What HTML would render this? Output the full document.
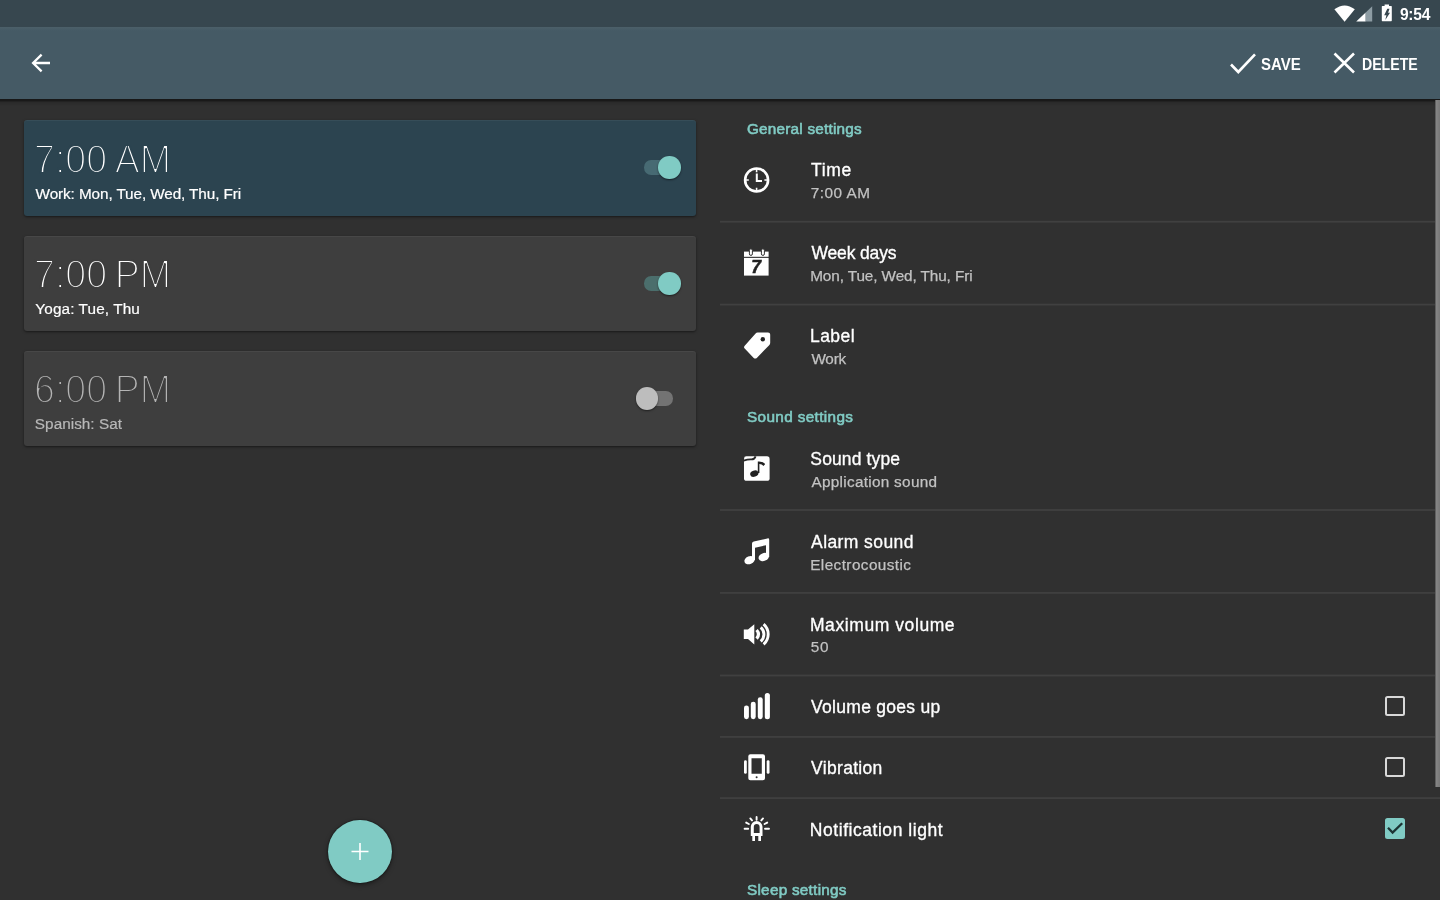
<!DOCTYPE html>
<html lang="en">
<head>
<meta charset="utf-8">
<title>Alarm</title>
<style>
*{box-sizing:border-box;margin:0;padding:0}
html,body{width:1440px;height:900px;overflow:hidden;background:#303030;font-family:"Liberation Sans",sans-serif;color:#fff}
#status{position:absolute;left:0;top:0;width:1440px;height:27px;background:#37474f}
#toolbar{position:absolute;left:0;top:27px;width:1440px;height:71.9px;background:linear-gradient(to bottom,#4c6069 0,#465b66 3px,#455a65 5px)}
#tbshadow{position:absolute;left:0;top:98.9px;width:1440px;height:7px;background:linear-gradient(to bottom,rgba(0,0,0,.5) 0,rgba(0,0,0,.45) 2px,rgba(0,0,0,.12) 3px,rgba(0,0,0,0) 7px)}
.abs{position:absolute}
.clock{position:absolute;top:1px;left:1400px;height:27px;line-height:28px;font-size:15.6px;font-weight:bold;white-space:nowrap;letter-spacing:-.3px;transform-origin:0 50%}
.act{position:absolute;top:27px;height:71px;line-height:75px;font-size:15.6px;font-weight:bold;white-space:nowrap;transform-origin:0 50%}
.card{position:absolute;left:24px;width:672px;height:94.5px;border-radius:3px;background:#3e3e3e;box-shadow:0 1px 2.5px rgba(0,0,0,.5),inset 0 1px 0 rgba(255,255,255,.05)}
.card.sel{background:#2c4450;height:95.7px}
.card .t{position:absolute;left:10px;top:13.7px;font-kerning:none;font-size:41.5px;line-height:48px;white-space:nowrap;-webkit-text-stroke:2.15px #3e3e3e;word-spacing:-3px;transform:scaleX(.905);transform-origin:0 50%}
.card.sel .t{-webkit-text-stroke-color:#2c4450;top:14.7px}
.card .s{position:absolute;left:12px;top:63px;font-size:15.3px;line-height:20px;white-space:nowrap;-webkit-text-stroke:.2px currentColor}
.card.sel .s{top:64px}
.card.off .t{color:#b4b4b4}
.card.off .s{color:#b8b8b8}
.sw{position:absolute;top:40.2px;left:620px;width:28.5px;height:14.4px;border-radius:7.2px;background:#476a73}
.card:not(.sel) .sw{background:#4b6e6c}
.sw i{position:absolute;top:-4.1px;left:14.2px;width:22.6px;height:22.6px;border-radius:50%;background:#80cbc4;box-shadow:0 1px 2px rgba(0,0,0,.5)}
.sel .sw{top:40.3px}
.card.off .sw{background:#737373}
.card.off .sw i{left:-8.4px;background:#bdbdbd}
#fab{position:absolute;left:328px;top:819.8px;width:64px;height:63.6px;border-radius:50%;background:#80cbc4;box-shadow:0 0 2px rgba(0,0,0,.7),0 2px 5px rgba(0,0,0,.4)}
.hdr{position:absolute;left:747px;font-size:15.3px;font-weight:normal;-webkit-text-stroke:.6px #80cbc4;color:#80cbc4;line-height:20px;white-space:nowrap}
.row{position:absolute;left:720px;width:715px}
.row .a{position:absolute;left:91px;font-size:17.5px;line-height:22px;white-space:nowrap;color:#fff;-webkit-text-stroke:.32px #fff}
.row .b{position:absolute;left:91px;font-size:15.3px;line-height:20px;white-space:nowrap;color:#c2c2c2;-webkit-text-stroke:.25px #c2c2c2}
.div{position:absolute;left:720px;width:720px;height:2px;background:#444}
.cb{position:absolute;left:1384.8px;width:20.5px;height:20.5px;border:2.3px solid #d8d8d8;border-radius:2.5px}
.cb.on{background:#80cbc4;border-color:#80cbc4}
#scroll{position:absolute;left:1435px;top:99.5px;width:5px;height:687px;background:linear-gradient(to right,#606060 0,#606060 1px,#868686 1px,#787878 5px)}
</style>
</head>
<body>
<div id="root" style="position:absolute;left:0;top:0;width:1440px;height:900px;will-change:transform">
<div id="status">
  <div class="clock">9:54</div>
</div>
<div id="toolbar"></div><div id="tbshadow"></div>
<div class="act" style="left:1260.5px;transform:scaleX(.96)">SAVE</div>
<div class="act" style="left:1362.2px;transform:scaleX(.905)">DELETE</div>

<div class="card sel" style="top:120px"><div class="t">7:00 AM</div><div class="s" style="letter-spacing:-0.10px;margin-left:-0.40px">Work: Mon, Tue, Wed, Thu, Fri</div><div class="sw"><i></i></div></div>
<div class="card" style="top:236px"><div class="t">7:00 PM</div><div class="s" style="letter-spacing:0.12px;margin-left:-0.65px">Yoga: Tue, Thu</div><div class="sw"><i></i></div></div>
<div class="card off" style="top:351px"><div class="t">6:00 PM</div><div class="s" style="letter-spacing:0.03px;margin-left:-1.15px">Spanish: Sat</div><div class="sw"><i></i></div></div>

<div id="fab"></div>

<div class="hdr" style="top:119px;letter-spacing:0.22px;margin-left:-0.05px">General settings</div>
<div class="row" style="top:140px"><div class="a" style="top:19px;letter-spacing:0.70px;margin-left:-0.05px">Time</div><div class="b" style="top:43px;letter-spacing:0.52px;margin-left:-0.30px">7:00 AM</div></div>
<div class="div" style="top:220px;height:3px;background:linear-gradient(to bottom,#323232 0px,#323232 1px,#404040 1px,#404040 2px,#393939 2px,#393939 3px)"></div>
<div class="row" style="top:222px"><div class="a" style="top:20px;letter-spacing:-0.15px;margin-left:0.45px">Week days</div><div class="b" style="top:44px;letter-spacing:-0.09px;margin-left:-0.80px">Mon, Tue, Wed, Thu, Fri</div></div>
<div class="div" style="top:303px;height:3px;background:linear-gradient(to bottom,#343434 0px,#343434 1px,#404040 1px,#404040 2px,#373737 2px,#373737 3px)"></div>
<div class="row" style="top:305px"><div class="a" style="top:20px;letter-spacing:0.44px;margin-left:-1.05px">Label</div><div class="b" style="top:44px;letter-spacing:-0.23px;margin-left:0.45px">Work</div></div>
<div class="hdr" style="top:407px;letter-spacing:0.37px;margin-left:-0.05px">Sound settings</div>
<div class="row" style="top:428px"><div class="a" style="top:20px;letter-spacing:0.12px;margin-left:-0.65px">Sound type</div><div class="b" style="top:44px;letter-spacing:0.30px;margin-left:0.45px">Application sound</div></div>
<div class="div" style="top:509px;height:2px;background:linear-gradient(to bottom,#3e3e3e 0px,#3e3e3e 1px,#3e3e3e 1px,#3e3e3e 2px)"></div>
<div class="row" style="top:511px"><div class="a" style="top:20px;letter-spacing:0.41px;margin-left:0.10px">Alarm sound</div><div class="b" style="top:44px;letter-spacing:0.43px;margin-left:-0.80px">Electrocoustic</div></div>
<div class="div" style="top:592px;height:2px;background:linear-gradient(to bottom,#3f3f3f 0px,#3f3f3f 1px,#3c3c3c 1px,#3c3c3c 2px)"></div>
<div class="row" style="top:594px"><div class="a" style="top:20px;letter-spacing:0.58px;margin-left:-1.05px">Maximum volume</div><div class="b" style="top:43px;letter-spacing:0.80px;margin-left:-0.30px">50</div></div>
<div class="div" style="top:674px;height:3px;background:linear-gradient(to bottom,#363636 0px,#363636 1px,#404040 1px,#404040 2px,#363636 2px,#363636 3px)"></div>
<div class="row" style="top:677px"><div class="a" style="top:19px;letter-spacing:0.28px;margin-left:0.10px">Volume goes up</div></div>
<div class="cb" style="top:695.8px"></div>
<div class="div" style="top:736px;height:2px;background:linear-gradient(to bottom,#3f3f3f 0px,#3f3f3f 1px,#3c3c3c 1px,#3c3c3c 2px)"></div>
<div class="row" style="top:738px"><div class="a" style="top:19px;letter-spacing:0.31px;margin-left:0.10px">Vibration</div></div>
<div class="cb" style="top:756.8px"></div>
<div class="div" style="top:797px;height:2px;background:linear-gradient(to bottom,#3c3c3c 0px,#3c3c3c 1px,#3f3f3f 1px,#3f3f3f 2px)"></div>
<div class="row" style="top:799px"><div class="a" style="top:20px;letter-spacing:0.54px;margin-left:-1.15px">Notification light</div></div>
<div class="cb on" style="top:818.2px"></div>
<div class="hdr" style="top:880px;letter-spacing:0.26px;margin-left:0.00px">Sleep settings</div>
<div id="scroll"></div>
<svg class="abs" style="left:0;top:0" width="1440" height="900" viewBox="0 0 1440 900">
<!-- status icons -->
<path d="M1344.6,21.8 L1334.4,9.2 Q1344.6,1.6 1354.8,9.2 Z" fill="#fff"/>
<path d="M1356.2,21.6 L1365.7,21.6 L1365.7,12.5 Z" fill="#fff"/>
<path d="M1365.7,21.6 L1372.2,21.6 L1372.2,6.3 L1365.7,12.5 Z" fill="#8d9ca3"/>
<path d="M1384.6,4.4 h4.4 v1.6 h2.2 q0.6,0 0.6,0.6 v14 q0,0.6 -0.6,0.6 h-8.8 q-0.6,0 -0.6,-0.6 v-14 q0,-0.6 0.6,-0.6 h2.2 Z" fill="#fff"/>
<path d="M1387.3,8.7 H1389.5 L1388.1,12.7 H1390 L1385.3,20 L1386.4,15.2 H1384.2 Z" fill="#37474f"/>
<!-- back arrow -->
<path d="M50,63 H33 M41.6,54.6 L33.1,63 L41.6,71.4" fill="none" stroke="#fff" stroke-width="2.3" stroke-linecap="butt" stroke-linejoin="miter"/>
<!-- save check -->
<path d="M1231,64.5 L1238.3,72 L1255,54.3" fill="none" stroke="#fff" stroke-width="2.6"/>
<!-- delete X -->
<path d="M1334.5,53.5 L1354,72.5 M1354,53.5 L1334.5,72.5" fill="none" stroke="#fff" stroke-width="2.6"/>
<!-- FAB plus -->
<path d="M351.5,851.5 H368.5 M360,843 V860" fill="none" stroke="#fff" stroke-width="1.6"/>
<!-- clock -->
<g fill="none" stroke="#fff">
<circle cx="756.6" cy="180" r="11.5" stroke-width="2.6"/>
<path d="M756.6,169 v3.2 M756.6,191 v-3.2 M745.6,180 h3.2 M767.6,180 h-3.2" stroke-width="1.6"/>
<path d="M756.8,173.5 V181 H762" stroke-width="2"/>
</g>
<!-- calendar -->
<rect x="744" y="251.6" width="24.6" height="5.2" fill="#fff"/>
<rect x="744" y="257.9" width="24.6" height="17.7" fill="#fff"/>
<rect x="749.4" y="248.8" width="3" height="6.6" rx="1.5" fill="#fff" stroke="#303030" stroke-width="1"/>
<rect x="761.4" y="248.8" width="3" height="6.6" rx="1.5" fill="#fff" stroke="#303030" stroke-width="1"/>
<text x="756.2" y="273.2" text-anchor="middle" font-family="Liberation Sans, sans-serif" font-weight="bold" font-style="italic" font-size="17.5" fill="#222" stroke="#222" stroke-width=".5">7</text>
<!-- label tag -->
<path d="M757.6,332.4 L768,332.4 Q770.2,332.4 770.2,334.6 L770.2,342.8 Q770.2,344 769.4,344.9 L756.8,357.9 Q755.2,359.3 753.7,357.9 L744.7,348.6 Q743.4,347.1 744.7,345.7 L755.6,333.4 Q756.4,332.4 757.6,332.4 Z" fill="#fff"/>
<circle cx="762.8" cy="339.3" r="2.2" fill="#222"/>
<!-- sound type folder -->
<path d="M746.4,456.3 H767 Q769.6,456.3 769.6,458.9 V478.2 Q769.6,480.8 767,480.8 H746.6 Q744,480.8 744,478.2 V458.7 Q744,456.3 746.4,456.3 Z" fill="#fff"/>
<path d="M743.6,460.6 Q748,459.2 751.5,459.4 Q754.6,459.4 755.6,456.4" fill="none" stroke="#2a2a2a" stroke-width="1.8"/>
<ellipse cx="754.3" cy="473.6" rx="4.2" ry="3.1" transform="rotate(-18 754.3 473.6)" fill="#222"/>
<path d="M758.6,473 V462.2 Q762,462 764.3,464.6" fill="none" stroke="#222" stroke-width="1.6"/>
<path d="M759,462 Q763,461.6 765,464 L763.6,466 Q761.6,463.8 759,464 Z" fill="#222"/>
<!-- alarm sound notes -->
<path d="M752,543.6 Q752,541.9 753.8,541.5 L767.4,538.4 Q769.2,538 769.2,539.8 L769.2,557 L766,557 L766,545.2 L755,547.7 L755,560 L752,560 Z" fill="#fff"/>
<ellipse cx="749.6" cy="560.2" rx="5.4" ry="3.9" transform="rotate(-22 749.6 560.2)" fill="#fff"/>
<ellipse cx="763.8" cy="557" rx="5.4" ry="3.9" transform="rotate(-22 763.8 557)" fill="#fff"/>
<!-- max volume speaker -->
<path d="M743.8,629.6 H748 L754.3,624.2 V644.4 L748,639 H743.8 Z" fill="#fff"/>
<g fill="none" stroke="#fff">
<path d="M756.6,630 Q760.4,634.3 756.6,638.6" stroke-width="3.2"/>
<path d="M760.7,627.3 A9.2,9.2 0 0 1 760.7,641.3" stroke-width="2.9"/>
<path d="M763.6,624.2 A13.4,13.4 0 0 1 763.6,644.4" stroke-width="2.9"/>
</g>
<!-- volume goes up bars -->
<rect x="744" y="705.4" width="4.9" height="13.8" rx="2.4" fill="#fff"/>
<rect x="750.8" y="701.7" width="4.9" height="17.5" rx="2.4" fill="#fff"/>
<rect x="757.8" y="697.2" width="4.9" height="22" rx="2.4" fill="#fff"/>
<rect x="764.8" y="692.9" width="5.1" height="26.3" rx="2.5" fill="#fff"/>
<!-- vibration -->
<path d="M750.4,754.2 H762.9 Q765,754.2 765,756.3 V778.2 Q765,780.3 762.9,780.3 H750.4 Q748.3,780.3 748.3,778.2 V756.3 Q748.3,754.2 750.4,754.2 Z M751.5,758.2 V773.8 H761.8 V758.2 Z" fill="#fff" fill-rule="evenodd"/>
<circle cx="756.6" cy="777.2" r="1" fill="#303030"/>
<rect x="744" y="760.2" width="2.8" height="13.6" rx="1.4" fill="#fff"/>
<rect x="766.7" y="760.2" width="2.8" height="13.6" rx="1.4" fill="#fff"/>
<!-- notification light -->
<path d="M750.8,836 V826.8 A5.85,5.85 0 0 1 762.5,826.8 V836 Z M753.8,833 H759.6 V827 A2.9,2.9 0 0 0 753.8,827 Z" fill="#fff" fill-rule="evenodd"/>
<rect x="752.3" y="835" width="2.7" height="6" fill="#fff"/>
<rect x="758.3" y="835" width="2.7" height="6" fill="#fff"/>
<g stroke="#fff" stroke-width="1.9" stroke-linecap="round" fill="none">
<path d="M744.6,828.7 H748.2 M765,828.7 H769 M756.6,817 V819.8 M750.3,818.4 L752,820.4 M763,818.4 L761.3,820.4 M746.2,822.6 L748.8,824 M767.2,822.6 L764.6,824"/>
</g>
<!-- checkbox check -->
<path d="M1388,827.8 L1392.6,832.6 L1402.2,823.2" fill="none" stroke="#1c3434" stroke-width="2.3"/>
</svg>

</div>
</body>
</html>
